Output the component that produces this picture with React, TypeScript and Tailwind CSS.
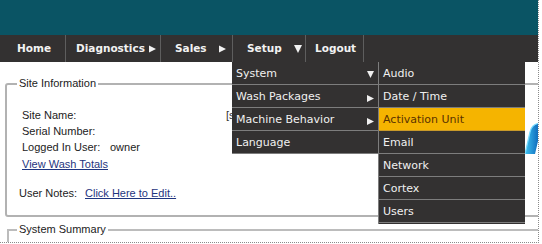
import React from "react";

function TriRight({ className = "" }: { className?: string }) {
  return (
    <svg width="8" height="8" viewBox="0 0 8 8" className={className}>
      <polygon points="0,0 8,4 0,8" fill="currentColor" />
    </svg>
  );
}

function TriDown({ className = "" }: { className?: string }) {
  return (
    <svg width="8" height="8" viewBox="0 0 8 8" className={className}>
      <polygon points="0,0 8,0 4,8" fill="currentColor" />
    </svg>
  );
}

const setupItems: { label: string; arrow?: "down" | "right" }[] = [
  { label: "System", arrow: "down" },
  { label: "Wash Packages", arrow: "right" },
  { label: "Machine Behavior", arrow: "right" },
  { label: "Language" },
];

const systemItems = ["Audio", "Date / Time", "Activation Unit", "Email", "Network", "Cortex", "Users"];

export default function App() {
  return (
    <div className="w-[542px] h-[244px] bg-white">
      <div className="relative w-[539px] h-[243px] border-r border-b border-dotted border-[#8a8a8a] overflow-hidden bg-white font-['Liberation_Sans',Arial,sans-serif] text-[11px] text-[#222]">
        {/* header */}
        <div className="h-[35px] bg-[#0a5464]" />

        {/* nav */}
        <nav className="h-[27px] bg-[#333131] flex font-['DejaVu_Sans',Verdana,sans-serif] font-bold text-[10.5px] text-[#f2f2f2]">
          <div className="w-[66px] border-r border-[#5e5e5e] flex items-center pl-[17px]">Home</div>
          <div className="w-[95px] border-r border-[#5e5e5e] flex items-center justify-between pl-[10px] pr-[4px]">
            <span>Diagnostics</span>
            <TriRight className="w-[7px] h-[8px]" />
          </div>
          <div className="w-[72px] border-r border-[#5e5e5e] flex items-center justify-between pl-[14px] pr-[6px]">
            <span>Sales</span>
            <TriRight className="w-[7px] h-[8px]" />
          </div>
          <div className="w-[73px] border-r border-[#5e5e5e] flex items-center justify-between pl-[14px] pr-[3px]">
            <span>Setup</span>
            <TriDown className="w-[8px] h-[8px]" />
          </div>
          <div className="w-[58px] border-r border-[#5e5e5e] flex items-center pl-[9px]">Logout</div>
        </nav>

        {/* Site Information */}
        <fieldset className="ml-[5px] mt-[15px] w-[560px] border-2 border-[#b2b2b2] rounded-[3px] pl-[10px] pt-[17px] pb-[14px]">
          <legend className="px-[2px] leading-[13px]">Site Information</legend>
          <div className="grid grid-cols-[1fr_39px]">
            <div className="leading-[16px]">
              <div className="ml-[5px] flex">
                <span className="w-[204px]">Site Name:</span>
                <span className="text-[#333]">[site]</span>
              </div>
              <div className="ml-[5px]">Serial Number:</div>
              <div className="ml-[5px] flex">
                <span className="w-[88px]">Logged In User:</span>
                <span>owner</span>
              </div>
              <div className="ml-[5px] mt-[1px]">
                <a className="text-[#1f3580] underline">View Wash Totals</a>
              </div>
              <div className="ml-[2px] mt-[13px] flex">
                <span className="w-[66px]">User Notes:</span>
                <a className="text-[#1f3580] underline">Click Here to Edit..</a>
              </div>
            </div>
            <svg width="39" height="34" viewBox="0 0 39 34" className="mt-[14px]">
              <defs>
                <linearGradient id="lg" x1="0" y1="0" x2="1" y2="0">
                  <stop offset="0" stopColor="#3fc4f2" />
                  <stop offset="0.3" stopColor="#1677c4" />
                  <stop offset="1" stopColor="#0c3a85" />
                </linearGradient>
              </defs>
              <path d="M1 33 L6 11 Q8 2 18 2 L39 2 L39 12 L20 12 Q16 12 15 16 L11 33 Z" fill="url(#lg)" />
              <path d="M1 33 L6 11 Q8 2 18 2" fill="none" stroke="#7adcff" strokeWidth="1.2" />
            </svg>
          </div>
        </fieldset>

        {/* System Summary */}
        <fieldset className="ml-[7px] mt-[6px] w-[560px] h-[40px] border-2 border-[#bcbcbc] pl-[8px]">
          <legend className="px-[2px] leading-[13px]">System Summary</legend>
        </fieldset>

        {/* Setup dropdown */}
        <div className="absolute left-[232px] top-[62px] w-[146px] bg-[#333131] font-['DejaVu_Sans',Verdana,sans-serif] text-[11px] text-[#f0f0f0]">
          {setupItems.map((it) => (
            <div key={it.label} className="h-[23px] pt-[2px] border-b border-[#7d7d7d] flex items-center justify-between pl-[4px] pr-[4px]">
              <span>{it.label}</span>
              {it.arrow === "down" && <TriDown className="w-[7px] h-[7px]" />}
              {it.arrow === "right" && <TriRight className="w-[7px] h-[7px] mt-[3px]" />}
            </div>
          ))}
        </div>

        {/* System submenu */}
        <div className="absolute left-[378px] top-[62px] w-[147px] bg-[#333131] border-l border-[#7d7d7d] font-['DejaVu_Sans',Verdana,sans-serif] text-[11px] text-[#f0f0f0]">
          {systemItems.map((label) => (
            <div
              key={label}
              className={
                label === "Activation Unit"
                  ? "h-[23px] pt-[2px] border-b border-[#c99a2a] bg-[#f5b400] text-[#5a3200] flex items-center pl-[4px]"
                  : "h-[23px] pt-[2px] border-b border-[#7d7d7d] flex items-center pl-[4px]"
              }
            >
              {label}
            </div>
          ))}
          <div className="h-[1px]" />
        </div>
      </div>
    </div>
  );
}
